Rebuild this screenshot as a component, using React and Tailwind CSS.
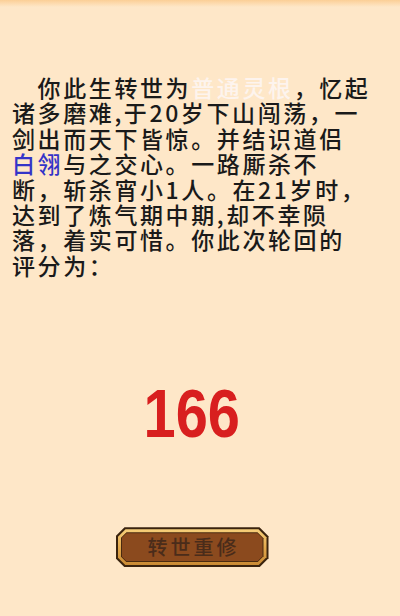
const CUT_OUTER =
  "[clip-path:polygon(9px_0,calc(100%_-_9px)_0,100%_9px,100%_calc(100%_-_9px),calc(100%_-_9px)_100%,9px_100%,0_calc(100%_-_9px),0_9px)]";
const CUT_MID =
  "[clip-path:polygon(8px_0,calc(100%_-_8px)_0,100%_8px,100%_calc(100%_-_8px),calc(100%_-_8px)_100%,8px_100%,0_calc(100%_-_8px),0_8px)]";
const CUT_INNER =
  "[clip-path:polygon(6px_0,calc(100%_-_6px)_0,100%_6px,100%_calc(100%_-_6px),calc(100%_-_6px)_100%,6px_100%,0_calc(100%_-_6px),0_6px)]";
const CUT_FILL =
  "[clip-path:polygon(5px_0,calc(100%_-_5px)_0,100%_5px,100%_calc(100%_-_5px),calc(100%_-_5px)_100%,5px_100%,0_calc(100%_-_5px),0_5px)]";

const lines = [
  [
    { t: "\u3000" },
    { t: "你此生转世为" },
    { t: "普通灵根", c: "text-[#fdf4ee]" },
    { t: "，忆起" },
  ],
  [{ t: "诸多磨难,于20岁下山闯荡，一" }],
  [{ t: "剑出而天下皆惊。并结识道侣" }],
  [{ t: "白翎", c: "text-[#3434c8]" }, { t: "与之交心。一路厮杀不" }],
  [{ t: "断，斩杀宵小1人。在21岁时，" }],
  [{ t: "达到了炼气期中期,却不幸陨" }],
  [{ t: "落，着实可惜。你此次轮回的" }],
  [{ t: "评分为：" }],
];

function RebirthButton() {
  return (
    <button className={`w-[153px] h-[40px] bg-[#3a230e] p-[2px] ${CUT_OUTER}`}>
      <div className={`w-full h-full bg-gradient-to-b from-[#f6cf7a] via-[#e4a94c] to-[#c98a34] p-[3px] ${CUT_MID}`}>
        <div className={`w-full h-full bg-[#4a2a10] p-[1px] ${CUT_INNER}`}>
          <div
            className={`w-full h-full bg-[#8b4a1e] flex items-center justify-center ${CUT_FILL}`}
          >
            <span className="text-[20px] tracking-[3px] pl-[3px] font-medium text-[#4a2c1a] font-['Noto_Sans_CJK_SC',sans-serif]">
              转世重修
            </span>
          </div>
        </div>
      </div>
    </button>
  );
}

export default function App() {
  return (
    <div className="w-[400px] h-[616px] bg-[#fee7c8] overflow-hidden flex flex-col">
      <div className="h-[7px] bg-gradient-to-b from-[#fbcf96] to-[#fee7c8] shrink-0" />
      <div className="flex flex-col pl-[12px] pr-[28px]">
        <div className="mt-[68px] text-[23px] leading-[25.4px] tracking-[2.6px] font-medium text-[#1a1a1a] font-['Noto_Sans_CJK_SC',sans-serif]">
          {lines.map((line, i) => (
            <div key={i} className="whitespace-nowrap">
              {line.map((seg, j) => (
                <span key={j} className={seg.c}>
                  {seg.t}
                </span>
              ))}
            </div>
          ))}
        </div>

        <div className="mt-[101px] flex justify-center">
          <div className="text-[68px] leading-[68px] font-bold text-[#d81f1f] scale-x-[0.85] font-['Liberation_Sans',Arial,sans-serif]">
            166
          </div>
        </div>

        <div className="mt-[80px] flex justify-center">
          <RebirthButton />
        </div>
      </div>
    </div>
  );
}
